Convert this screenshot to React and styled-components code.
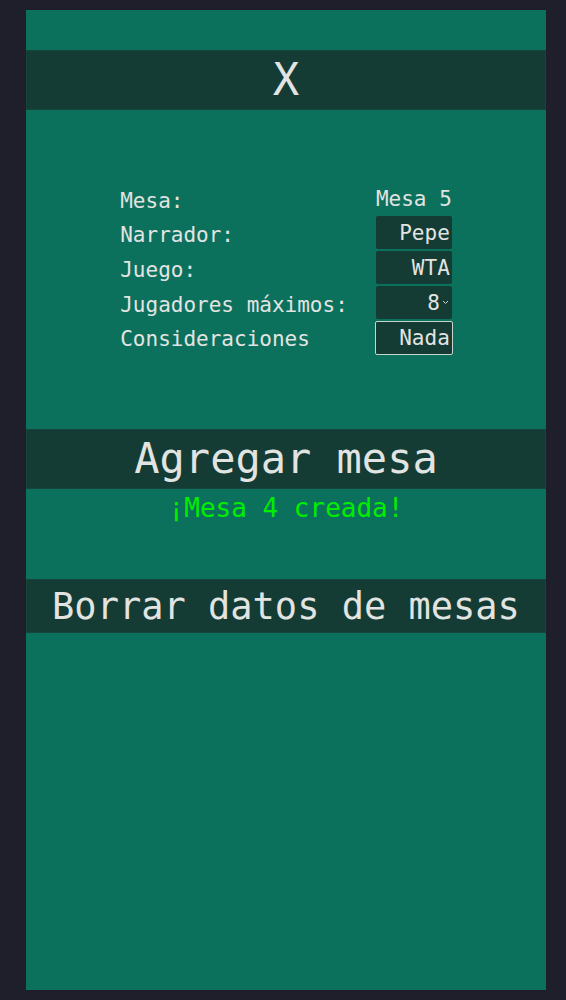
import React, { useState } from 'react';
import styled, { createGlobalStyle } from 'styled-components';

const GlobalStyle = createGlobalStyle`
  html, body {
    margin: 0;
    padding: 0;
    background: #1f1e2b;
  }
  body {
    font-family: "DejaVu Sans Mono", "Liberation Mono", monospace;
    color: #e2e4e2;
  }
`;

const Page = styled.div`
  padding: 10px 20px 10px 26px;
`;

const Panel = styled.div`
  background: #0b705c;
  height: 980px;
  padding-top: 40px;
  box-sizing: border-box;
  display: flex;
  flex-direction: column;
`;

const Bar = styled.button`
  display: block;
  width: 100%;
  height: ${p => p.$h || 60}px;
  margin: 0;
  padding: 0;
  border: 1px solid #17453c;
  background: #143b34;
  color: #e2e4e2;
  font-family: inherit;
  font-size: ${p => p.$size}px;
  line-height: 1;
  cursor: pointer;
`;

const Form = styled.div`
  display: grid;
  grid-template-columns: auto 76px;
  grid-template-rows: 29px 33px 33px 33px 34px;
  column-gap: 28px;
  row-gap: 2px;
  justify-content: center;
  align-items: center;
  margin: 75px 0 74px;
`;

const Label = styled.label`
  font-size: 21px;
  line-height: 29px;
  padding-top: ${p => p.$shift ?? 6}px;
`;

const Value = styled.div`
  font-size: 21px;
  text-align: right;
  line-height: 29px;
`;

const Field = styled.input`
  width: 76px;
  height: 33px;
  box-sizing: border-box;
  border: none;
  border-radius: 2px;
  background: #143b34;
  color: #e2e4e2;
  font-family: inherit;
  font-size: 21px;
  text-align: right;
  padding: 0 2px 0 0;
  outline: none;
  ${p => p.$outlined && `
    width: 78px;
    margin-left: -1px;
    border: 1px solid #c9d3cf;
    padding-right: 2px;
    height: 34px;
  `}
`;

const SelectWrap = styled.div`
  position: relative;
  width: 76px;
  height: 33px;
  background: #143b34;
  border-radius: 2px;
`;

const Select = styled.select`
  appearance: none;
  width: 100%;
  height: 100%;
  border: none;
  background: transparent;
  color: #e2e4e2;
  font-family: inherit;
  font-size: 21px;
  text-align: right;
  text-align-last: right;
  padding: 0 12px 0 0;
  outline: none;
`;

const Chevron = styled.svg`
  position: absolute;
  right: 3px;
  top: 14px;
  pointer-events: none;
`;

const Message = styled.div`
  color: #00ee00;
  font-size: 26px;
  text-align: center;
  margin-top: 4px;
  height: 86px;
`;

export default function App() {
  const [narrador, setNarrador] = useState('Pepe');
  const [juego, setJuego] = useState('WTA');
  const [max, setMax] = useState('8');
  const [cons, setCons] = useState('Nada');

  return (
    <Page>
      <GlobalStyle />
      <Panel>
        <Bar $size={44}>X</Bar>
        <Form>
          <Label $shift={4}>Mesa:</Label>
          <Value>Mesa 5</Value>
          <Label>Narrador:</Label>
          <Field value={narrador} onChange={e => setNarrador(e.target.value)} />
          <Label>Juego:</Label>
          <Field value={juego} onChange={e => setJuego(e.target.value)} />
          <Label>Jugadores máximos:</Label>
          <SelectWrap>
            <Select value={max} onChange={e => setMax(e.target.value)}>
              {[2, 3, 4, 5, 6, 7, 8].map(n => <option key={n}>{n}</option>)}
            </Select>
            <Chevron width="7" height="5" viewBox="0 0 7 5">
              <path d="M1 1l2.5 2.5L6 1" stroke="#cfd6d3" strokeWidth="1" fill="none" />
            </Chevron>
          </SelectWrap>
          <Label $shift={2}>Consideraciones</Label>
          <Field $outlined value={cons} onChange={e => setCons(e.target.value)} />
        </Form>
        <Bar $size={42}>Agregar mesa</Bar>
        <Message>¡Mesa 4 creada!</Message>
        <Bar $size={37} $h={54}>Borrar datos de mesas</Bar>
      </Panel>
    </Page>
  );
}
